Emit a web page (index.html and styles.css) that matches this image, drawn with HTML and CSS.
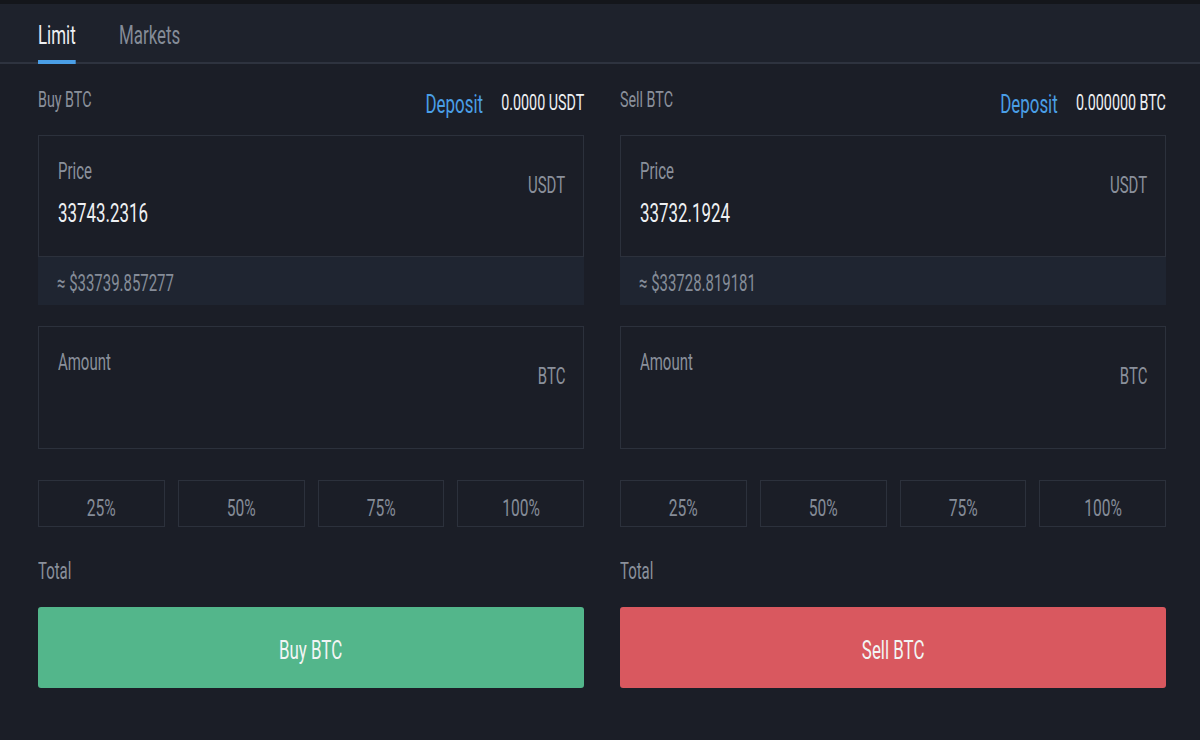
FILE: index.html
```
<!DOCTYPE html>
<html lang="en">
<head>
<meta charset="utf-8">
<title>Trade</title>
<link rel="stylesheet" href="styles.css">
</head>
<body>
<div class="trade">
  <nav class="tabs">
    <a class="tab active">Limit</a>
    <a class="tab">Markets</a>
  </nav>
  <div class="forms">
    <section class="form">
      <div class="form-head">
        <span class="form-title">Buy BTC</span>
        <span class="balance"><a class="deposit">Deposit</a><span class="bal-val">0.0000 USDT</span></span>
      </div>
      <div class="field">
        <div class="field-main">
          <span class="field-label">Price</span>
          <span class="field-value">33743.2316</span>
        </div>
        <span class="field-unit">USDT</span>
      </div>
      <div class="approx"><span class="approx-text">≈ $33739.857277</span></div>
      <div class="field amount">
        <div class="field-main">
          <span class="field-label">Amount</span>
        </div>
        <span class="field-unit">BTC</span>
      </div>
      <div class="pcts">
        <button class="pct"><span class="btn-text">25%</span></button>
        <button class="pct"><span class="btn-text">50%</span></button>
        <button class="pct"><span class="btn-text">75%</span></button>
        <button class="pct"><span class="btn-text">100%</span></button>
      </div>
      <div class="total"><span class="total-text">Total</span></div>
      <button class="submit buy"><span class="btn-text">Buy BTC</span></button>
    </section>
    <section class="form">
      <div class="form-head">
        <span class="form-title">Sell BTC</span>
        <span class="balance"><a class="deposit">Deposit</a><span class="bal-val">0.000000 BTC</span></span>
      </div>
      <div class="field">
        <div class="field-main">
          <span class="field-label">Price</span>
          <span class="field-value">33732.1924</span>
        </div>
        <span class="field-unit">USDT</span>
      </div>
      <div class="approx"><span class="approx-text">≈ $33728.819181</span></div>
      <div class="field amount">
        <div class="field-main">
          <span class="field-label">Amount</span>
        </div>
        <span class="field-unit">BTC</span>
      </div>
      <div class="pcts">
        <button class="pct"><span class="btn-text">25%</span></button>
        <button class="pct"><span class="btn-text">50%</span></button>
        <button class="pct"><span class="btn-text">75%</span></button>
        <button class="pct"><span class="btn-text">100%</span></button>
      </div>
      <div class="total"><span class="total-text">Total</span></div>
      <button class="submit sell"><span class="btn-text">Sell BTC</span></button>
    </section>
  </div>
</div>
</body>
</html>
```
FILE: styles.css
```
html, body {
  margin: 0;
  padding: 0;
  background: #1b1e27;
}

body {
  font-family: Roboto, "Liberation Sans", sans-serif;
  line-height: 1;
  color: #8a909b;
  width: 1200px;
  height: 740px;
  overflow: hidden;
}

/* Condensed look: Roboto squeezed horizontally */
.tab,
.form-title,
.balance,
.field-label,
.field-value,
.field-unit,
.approx-text,
.btn-text,
.total-text {
  display: inline-block;
  transform: scaleX(0.65);
  transform-origin: left center;
  white-space: nowrap;
}

.balance,
.field-unit {
  transform-origin: right center;
}

.btn-text {
  transform-origin: center center;
}

.trade {
  border-top: 4px solid #14161b;
  height: 736px;
  background: #1b1e27;
}

/* Tab bar */
.tabs {
  display: flex;
  align-items: flex-start;
  gap: 23px;
  padding: 0 38px;
  height: 58px;
  background: #1e222c;
  border-bottom: 2px solid #2e333f;
}

.tab {
  position: relative;
  height: 58px;
  box-sizing: border-box;
  padding-top: 18px;
  font-size: 26px;
  color: #858c98;
}

.tab.active {
  color: #eef0f3;
}

.tab.active::after {
  content: "";
  position: absolute;
  left: 0;
  right: 0;
  bottom: -2px;
  height: 4px;
  background: #4a9ee6;
}

/* Buy / sell columns */
.forms {
  display: grid;
  grid-template-columns: 546px 546px;
  gap: 36px;
  padding: 0 34px 0 38px;
}

.form {
  display: flex;
  flex-direction: column;
}

.form-head {
  display: flex;
  justify-content: space-between;
  align-items: flex-start;
  height: 71px;
}

.form-title {
  font-size: 22px;
  margin-top: 25px;
  color: #8a909b;
}

.balance {
  display: flex;
  align-items: flex-start;
  gap: 28px;
  margin-top: 27px;
}

.deposit {
  font-size: 26px;
  color: #4a9ee6;
}

.bal-val {
  font-size: 22px;
  margin-top: 1px;
  color: #eef0f3;
}

/* Input boxes */
.field {
  display: flex;
  justify-content: space-between;
  align-items: flex-start;
  border: 1px solid #2c313c;
  height: 122px;
  box-sizing: border-box;
  padding: 24px 18px 0 19px;
}

.field-main {
  display: flex;
  flex-direction: column;
  align-items: flex-start;
  gap: 17px;
}

.field-label {
  font-size: 23px;
  color: #8a909b;
}

.field-value {
  font-size: 26px;
  color: #eef0f3;
}

.field-unit {
  font-size: 23px;
  margin-top: 14px;
  color: #8a909b;
}

.approx {
  background: #1f2531;
  height: 48px;
  box-sizing: border-box;
  padding: 15px 0 0 19px;
}

.approx-text {
  font-size: 23px;
  color: #858c98;
}

.amount {
  margin-top: 21px;
  height: 123px;
}

/* Percentage shortcuts */
.pcts {
  display: grid;
  grid-template-columns: repeat(4, 1fr);
  gap: 13px;
  margin-top: 31px;
}

.pct {
  height: 47px;
  background: transparent;
  border: 1px solid #2c313c;
  font-family: inherit;
  line-height: 1;
  font-size: 24px;
  color: #858c98;
  padding: 9px 0 0;
}

.total {
  margin-top: 33px;
  height: 24px;
}

.total-text {
  font-size: 23px;
  color: #8a909b;
}

/* Submit buttons */
.submit {
  margin-top: 23px;
  height: 81px;
  border: none;
  border-radius: 3px;
  font-family: inherit;
  line-height: 1;
  font-size: 26px;
  color: #f2f5f4;
  padding: 4px 0 0;
}

.buy {
  background: #53b68b;
}

.sell {
  background: #d9585f;
}
```
